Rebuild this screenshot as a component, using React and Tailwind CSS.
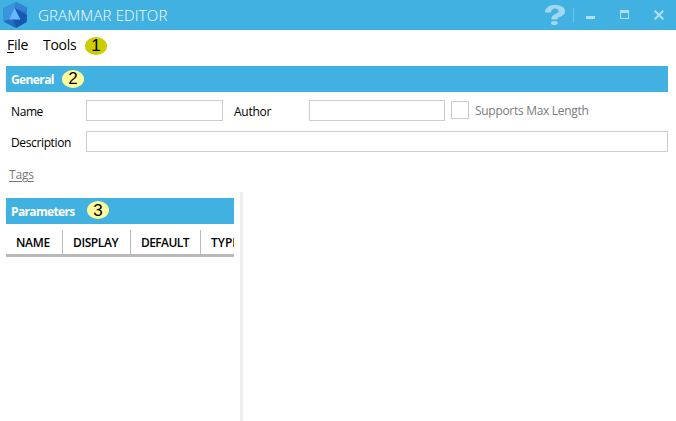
import React from "react";

function Marker({ children, className }) {
  return (
    <span
      className={`flex h-[18px] w-[22px] shrink-0 items-center justify-center rounded-[50%] font-['Liberation_Sans',sans-serif] text-[17px] font-normal leading-none tracking-normal text-black ${className}`}
    >
      {children}
    </span>
  );
}

function Logo() {
  return (
    <svg width="26" height="28" viewBox="0 0 26 28" className="mr-[9px] ml-[2px] shrink-0">
      <path d="M14 1 25 6.5 24.5 21 14 27 1.5 20.5V7Z" fill="#2679ca" />
      <path d="M14 1 1.5 7V20.5L7 18.5 12.5 7Z" fill="#3c94db" />
      <path d="M14 1 25 6.5 23.5 10 12.5 7Z" fill="#3385d1" />
      <path d="M12.5 7 25 14 24.5 21 14 27 11 18.5H18Z" fill="#1757b0" />
      <path d="M1.5 20.5 7 18.5H11L14 27Z" fill="#226fc1" />
      <path d="M12.5 7 18.5 18.5H7Z" fill="#67b8fa" />
    </svg>
  );
}

function WindowControls() {
  return (
    <svg width="136" height="30" viewBox="540 0 136 30" className="ml-auto shrink-0">
      <path
        d="M545 12.5C545 7.5 549 5 555 5C561.5 5 565 7.5 565 11.2C565 14.5 562.5 15.8 559.5 17.1C557.8 17.9 557.2 18.4 557.2 19.5H551.3C551.3 16.4 553 15.2 556 13.7C558 12.7 558.6 12.2 558.6 11C558.6 9.4 557.2 8.5 555 8.5C552.7 8.5 551.2 9.7 551 12.5Z"
        fill="#a2d8ef"
      />
      <ellipse cx="554.4" cy="23" rx="3.4" ry="2.1" fill="#a2d8ef" />
      <path d="M573 8h1v15h-1Z" fill="#70c3e7" />
      <path d="M586 16h9v3h-9Z" fill="#b0def2" />
      <path fillRule="evenodd" d="M620 10h9v9h-9ZM621 13v5h7v-5Z" fill="#b0def2" />
      <path d="M654.7 10.7 663.3 19.3M663.3 10.7 654.7 19.3" stroke="#b0def2" strokeWidth="2" />
    </svg>
  );
}

export default function App() {
  return (
    <div className="flex h-[421px] w-[676px] flex-col overflow-hidden bg-white font-['Open_Sans','Noto_Sans',sans-serif] text-[12px] text-black">
      <header className="flex h-[30px] shrink-0 items-center bg-[#41b1e1] text-white">
        <Logo />
        <h1 className="whitespace-nowrap pl-px text-[15px] font-light leading-none tracking-[0.15px]">
          GRAMMAR EDITOR
        </h1>
        <WindowControls />
      </header>

      <nav className="flex h-[30px] shrink-0 items-center pl-[7px] text-[14px] leading-none">
        <span className="w-[36px] tracking-[-0.3px]">
          <span className="underline underline-offset-2">F</span>ile
        </span>
        <span className="w-[42px] tracking-[-0.3px]">Tools</span>
        <Marker className="mt-px bg-[#cccc00]">1</Marker>
      </nav>

      <section className="mt-[6px] flex h-[126px] shrink-0 flex-col pr-[8px] pl-[6px]">
        <div className="flex h-[26px] items-center bg-[#41b1e1] pl-[5px] font-bold text-white">
          <span className="w-[51px] pt-px text-[12px] tracking-[-0.6px]">General</span>
          <Marker className="mb-px bg-[#ffff99]">2</Marker>
        </div>
        <div className="mt-[8px] flex h-[21px] items-center pl-[5px]">
          <label className="w-[75px] pt-[2px] tracking-[-0.4px]">Name</label>
          <div className="h-[21px] w-[137px] border border-[#cccccc]" />
          <label className="ml-[11px] w-[75px] pt-[2px] tracking-[-0.25px]">Author</label>
          <div className="h-[21px] w-[136px] border border-[#cccccc]" />
          <div className="mb-px ml-[6px] h-[18px] w-[18px] border border-[#cccccc]" />
          <span className="ml-[6px] whitespace-nowrap pt-px tracking-[-0.3px] text-[#7b7b7b]">
            Supports Max Length
          </span>
        </div>
        <div className="mt-[10px] flex h-[21px] items-center pl-[5px]">
          <label className="w-[75px] pt-[2px] tracking-[-0.37px]">Description</label>
          <div className="h-[21px] flex-1 border border-[#cccccc]" />
        </div>
        <div className="mt-[14px] pl-[3px] leading-[18px] tracking-[-0.2px] text-[#777777] underline underline-offset-2">
          Tags
        </div>
      </section>

      <main className="flex min-h-0 flex-1">
        <section className="mt-[6px] ml-[6px] w-[228px] overflow-hidden">
          <div className="flex h-[26px] items-center bg-[#41b1e1] pl-[5px] font-bold text-white">
            <span className="w-[76px] pt-px tracking-[-0.65px]">Parameters</span>
            <Marker className="mb-[2px] bg-[#ffff99]">3</Marker>
          </div>
          <div className="mt-[6px] flex h-[27px] border-b-[3px] border-[#b9b9b9] text-[12px] font-semibold leading-[25px]">
            <div className="w-[57px] shrink-0 border-r border-[#b9b9b9] pl-[10px] tracking-[-0.3px]">NAME</div>
            <div className="w-[68px] shrink-0 border-r border-[#b9b9b9] pl-[10px] tracking-[-0.4px]">DISPLAY</div>
            <div className="w-[70px] shrink-0 border-r border-[#b9b9b9] pl-[10px] tracking-[-0.6px]">DEFAULT</div>
            <div className="shrink-0 pl-[10px] tracking-[0px]">TYPE</div>
          </div>
        </section>
        <div className="ml-[6px] w-[3px] bg-[#eeeeee]" />
      </main>
    </div>
  );
}
